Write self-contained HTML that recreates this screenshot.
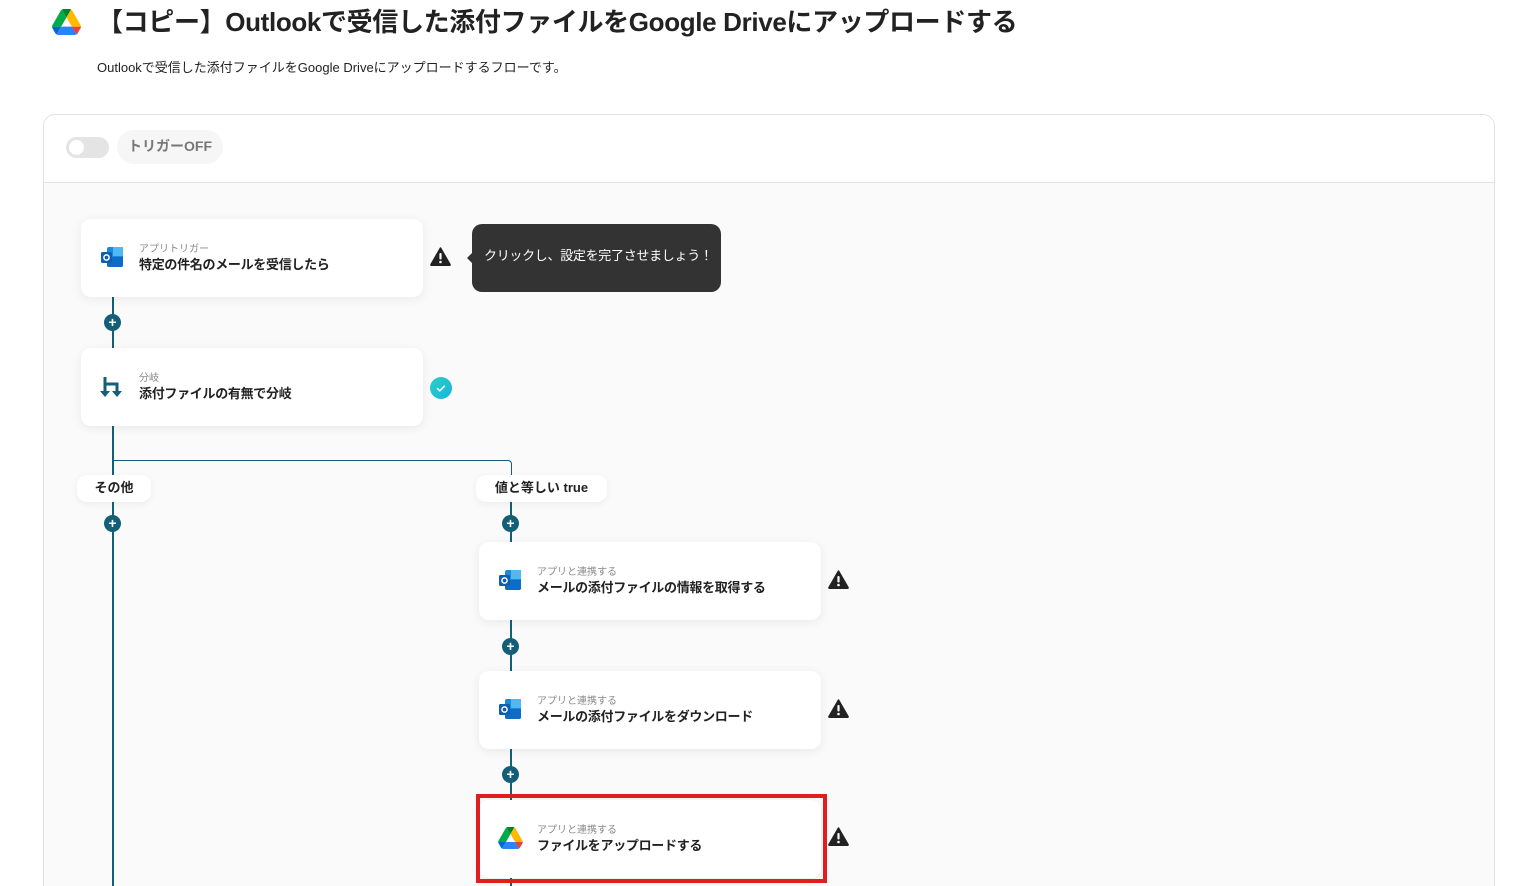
<!DOCTYPE html>
<html><head><meta charset="utf-8"><style>
*{margin:0;padding:0;box-sizing:border-box}
html,body{width:1522px;height:886px;overflow:hidden}
body{background:#fff;position:relative;font-family:"Liberation Sans","Noto Sans CJK JP",sans-serif;color:#222}
.a{position:absolute}
.title{left:97px;top:2px;font-size:26px;font-weight:bold;color:#222;white-space:nowrap;letter-spacing:-0.35px}
.sub{left:97px;top:57px;font-size:13px;color:#222;white-space:nowrap}
.box{left:43px;top:114px;width:1452px;height:790px;border:1px solid #e2e2e2;border-radius:12px;background:#fafafa;overflow:hidden}
.hdr{left:0;top:0;width:100%;height:68px;background:#fff;border-bottom:1px solid #e2e2e2}
.card{background:#fff;border-radius:10px;width:342px;height:78px;box-shadow:0 2px 10px rgba(0,0,0,.07)}
.card .lb{position:absolute;left:58px;top:21px;font-size:10px;color:#888}
.card .tt{position:absolute;left:58px;top:35px;font-size:13px;font-weight:bold;color:#222;white-space:nowrap;letter-spacing:-0.3px}
.card svg{position:absolute;left:19px;top:27px}
.vl{background:#135f78;width:1.5px}
.pl{width:17px;height:17px;border-radius:50%;background:#135f78;color:#fff;font-size:14px;font-weight:bold;line-height:16px;text-align:center}
.tag{background:#fff;border-radius:10px;height:27px;font-size:13px;font-weight:bold;line-height:25px;text-align:center;box-shadow:0 2px 8px rgba(0,0,0,.06)}
</style></head><body>
<svg class="a" style="left:52px;top:9px" width="29" height="26" viewBox="0 0 87.3 78"><path d="m6.6 66.85 3.85 6.65c.8 1.4 1.95 2.5 3.3 3.3l13.75-23.8h-27.5c0 1.55.4 3.1 1.2 4.5z" fill="#0066da"/><path d="m43.65 25-13.75-23.8c-1.35.8-2.5 1.9-3.3 3.3l-25.4 44a9.06 9.06 0 0 0 -1.2 4.5h27.5z" fill="#00ac47"/><path d="m73.55 76.8c1.35-.8 2.5-1.9 3.3-3.3l1.6-2.75 7.650-13.25c.8-1.4 1.2-2.950 1.2-4.5h-27.502l5.852 11.5z" fill="#ea4335"/><path d="m43.65 25 13.75-23.8c-1.35-.8-2.9-1.2-4.5-1.2h-18.5c-1.6 0-3.15.45-4.5 1.2z" fill="#00832d"/><path d="m59.8 53h-32.3l-13.75 23.8c1.35.8 2.9 1.2 4.5 1.2h50.8c1.6 0 3.15-.45 4.5-1.2z" fill="#2684fc"/><path d="m73.4 26.5-12.7-22c-.8-1.4-1.95-2.5-3.3-3.3l-13.75 23.8 16.15 28h27.45c0-1.55-.4-3.1-1.2-4.5z" fill="#ffba00"/></svg>
<div class="a title">【コピー】Outlookで受信した添付ファイルをGoogle Driveにアップロードする</div>
<div class="a sub">Outlookで受信した添付ファイルをGoogle Driveにアップロードするフローです。</div>
<div class="a box">
 <div class="a hdr">
  <div class="a" style="left:22px;top:22px;width:43px;height:21px;border-radius:11px;background:#e4e4e4"><div class="a" style="left:3px;top:3px;width:15px;height:15px;border-radius:50%;background:#fff"></div></div>
  <div class="a" style="left:73px;top:15px;width:106px;height:34px;border-radius:17px;background:#f6f6f6;color:#777;font-weight:bold;font-size:14px;line-height:32px;text-align:center">トリガーOFF</div>
 </div>
</div>
<div class="a vl" style="left:112px;top:297px;height:51px"></div>
<div class="a vl" style="left:112px;top:426px;height:460px"></div>
<div class="a" style="left:112px;top:460px;width:400px;height:20px;border-top:1.5px solid #135f78;border-right:1.5px solid #135f78;border-top-right-radius:4px"></div>
<div class="a vl" style="left:510px;top:480px;height:62px"></div>
<div class="a vl" style="left:510px;top:620px;height:51px"></div>
<div class="a vl" style="left:510px;top:749px;height:51px"></div>
<div class="a vl" style="left:510px;top:878px;height:10px"></div>
<div class="a pl" style="left:104px;top:314px">+</div>
<div class="a pl" style="left:104px;top:515px">+</div>
<div class="a pl" style="left:502px;top:515px">+</div>
<div class="a pl" style="left:502px;top:638px">+</div>
<div class="a pl" style="left:502px;top:766px">+</div>
<div class="a tag" style="left:77px;top:475px;width:74px">その他</div>
<div class="a tag" style="left:476px;top:475px;width:131px">値と等しい true</div>
<div class="a card" style="left:81px;top:219px"><svg width="24" height="22" viewBox="0 0 24 22"><rect x="7" y="1" width="16" height="20" rx="2" fill="#1a8ae0"/><rect x="13" y="1" width="10" height="9" fill="#50b9f2"/><path d="M7 11 L23 11 L23 19 Q23 21 21 21 L9 21 Q7 21 7 19Z" fill="#0f6cc4"/><rect x="1" y="6" width="11" height="11" rx="1.5" fill="#0e5fb0"/><circle cx="6.5" cy="11.5" r="2.6" fill="none" stroke="#fff" stroke-width="1.5"/></svg><div class="lb">アプリトリガー</div><div class="tt">特定の件名のメールを受信したら</div></div>
<div class="a card" style="left:81px;top:348px"><svg width="24" height="24" viewBox="0 0 24 24"><path d="M5 2v16M5 9h12v9" fill="none" stroke="#135f78" stroke-width="3"/><path d="M0 16h10l-5 6zM12 16h10l-5 6z" fill="#135f78"/></svg><div class="lb">分岐</div><div class="tt">添付ファイルの有無で分岐</div></div>
<div class="a card" style="left:479px;top:542px"><svg width="24" height="22" viewBox="0 0 24 22"><rect x="7" y="1" width="16" height="20" rx="2" fill="#1a8ae0"/><rect x="13" y="1" width="10" height="9" fill="#50b9f2"/><path d="M7 11 L23 11 L23 19 Q23 21 21 21 L9 21 Q7 21 7 19Z" fill="#0f6cc4"/><rect x="1" y="6" width="11" height="11" rx="1.5" fill="#0e5fb0"/><circle cx="6.5" cy="11.5" r="2.6" fill="none" stroke="#fff" stroke-width="1.5"/></svg><div class="lb">アプリと連携する</div><div class="tt">メールの添付ファイルの情報を取得する</div></div>
<div class="a card" style="left:479px;top:671px"><svg width="24" height="22" viewBox="0 0 24 22"><rect x="7" y="1" width="16" height="20" rx="2" fill="#1a8ae0"/><rect x="13" y="1" width="10" height="9" fill="#50b9f2"/><path d="M7 11 L23 11 L23 19 Q23 21 21 21 L9 21 Q7 21 7 19Z" fill="#0f6cc4"/><rect x="1" y="6" width="11" height="11" rx="1.5" fill="#0e5fb0"/><circle cx="6.5" cy="11.5" r="2.6" fill="none" stroke="#fff" stroke-width="1.5"/></svg><div class="lb">アプリと連携する</div><div class="tt">メールの添付ファイルをダウンロード</div></div>
<div class="a card" style="left:479px;top:800px"><svg width="25" height="22" viewBox="0 0 87.3 78"><path d="m6.6 66.85 3.85 6.65c.8 1.4 1.95 2.5 3.3 3.3l13.75-23.8h-27.5c0 1.55.4 3.1 1.2 4.5z" fill="#0066da"/><path d="m43.65 25-13.75-23.8c-1.35.8-2.5 1.9-3.3 3.3l-25.4 44a9.06 9.06 0 0 0 -1.2 4.5h27.5z" fill="#00ac47"/><path d="m73.55 76.8c1.35-.8 2.5-1.9 3.3-3.3l1.6-2.75 7.65-13.25c.8-1.4 1.2-2.95 1.2-4.5h-27.502l5.852 11.5z" fill="#ea4335"/><path d="m43.65 25 13.75-23.8c-1.35-.8-2.9-1.2-4.5-1.2h-18.5c-1.6 0-3.15.45-4.5 1.2z" fill="#00832d"/><path d="m59.8 53h-32.3l-13.75 23.8c1.35.8 2.9 1.2 4.5 1.2h50.8c1.6 0 3.15-.45 4.5-1.2z" fill="#2684fc"/><path d="m73.4 26.5-12.7-22c-.8-1.4-1.95-2.5-3.3-3.3l-13.75 23.8 16.15 28h27.45c0-1.55-.4-3.1-1.2-4.5z" fill="#ffba00"/></svg><div class="lb">アプリと連携する</div><div class="tt">ファイルをアップロードする</div></div>
<div class="a" style="left:476px;top:794px;width:351px;height:89px;border:4px solid #e01e1e"></div>
<svg class="a" style="left:430px;top:247px" width="21" height="19" viewBox="0 0 21 19"><path d="M10.5 1 L20 17.5 Q20.3 18.3 19.3 18.3 H1.7 Q0.7 18.3 1 17.5Z" fill="#222" stroke="#222" stroke-linejoin="round" stroke-width="1.5"/><rect x="9.4" y="6" width="2.2" height="6.5" rx="1" fill="#fff"/><circle cx="10.5" cy="15" r="1.3" fill="#fff"/></svg>
<svg class="a" style="left:828px;top:570px" width="21" height="19" viewBox="0 0 21 19"><path d="M10.5 1 L20 17.5 Q20.3 18.3 19.3 18.3 H1.7 Q0.7 18.3 1 17.5Z" fill="#222" stroke="#222" stroke-linejoin="round" stroke-width="1.5"/><rect x="9.4" y="6" width="2.2" height="6.5" rx="1" fill="#fff"/><circle cx="10.5" cy="15" r="1.3" fill="#fff"/></svg>
<svg class="a" style="left:828px;top:699px" width="21" height="19" viewBox="0 0 21 19"><path d="M10.5 1 L20 17.5 Q20.3 18.3 19.3 18.3 H1.7 Q0.7 18.3 1 17.5Z" fill="#222" stroke="#222" stroke-linejoin="round" stroke-width="1.5"/><rect x="9.4" y="6" width="2.2" height="6.5" rx="1" fill="#fff"/><circle cx="10.5" cy="15" r="1.3" fill="#fff"/></svg>
<svg class="a" style="left:828px;top:827px" width="21" height="19" viewBox="0 0 21 19"><path d="M10.5 1 L20 17.5 Q20.3 18.3 19.3 18.3 H1.7 Q0.7 18.3 1 17.5Z" fill="#222" stroke="#222" stroke-linejoin="round" stroke-width="1.5"/><rect x="9.4" y="6" width="2.2" height="6.5" rx="1" fill="#fff"/><circle cx="10.5" cy="15" r="1.3" fill="#fff"/></svg>
<svg class="a" style="left:430px;top:377px" width="22" height="22" viewBox="0 0 22 22"><defs><linearGradient id="g" x1="0" y1="0" x2="1" y2="1"><stop offset="0" stop-color="#2ad0c4"/><stop offset="1" stop-color="#18b4e0"/></linearGradient></defs><circle cx="11" cy="11" r="11" fill="url(#g)"/><path d="M7 11.2l2.8 2.6 5-5" fill="none" stroke="#fff" stroke-width="1.5"/></svg>
<div class="a" style="left:472px;top:224px;width:249px;height:68px;background:#333;border-radius:10px;color:#fff;font-size:13px;line-height:64px;padding-left:12px;white-space:nowrap;letter-spacing:-0.3px">クリックし、設定を完了させましょう！</div>
<div class="a" style="left:467px;top:253px;width:0;height:0;border-top:5px solid transparent;border-bottom:5px solid transparent;border-right:5px solid #333"></div>
</body></html>
